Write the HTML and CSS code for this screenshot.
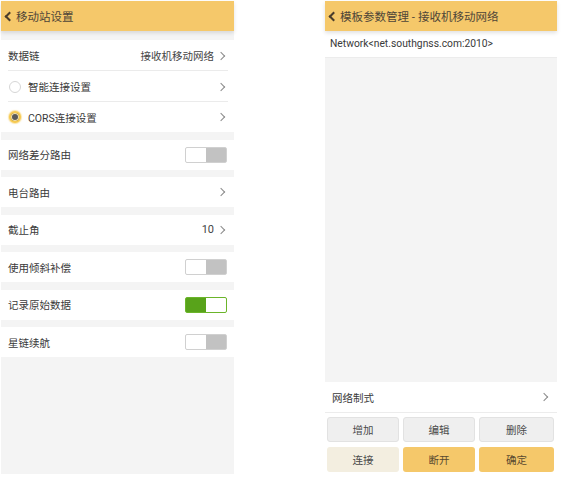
FILE: index.html
```html
<!DOCTYPE html>
<html>
<head>
<meta charset="utf-8">
<link rel="stylesheet" href="styles.css">
</head>
<body>
<div class="stage">
  <div class="phone left">
    <div class="header"><span class="back"></span><span class="title">移动站设置</span></div>
    <div class="content">
      <div class="group">
        <div class="row sep"><span class="label">数据链</span><span class="value">接收机移动网络</span><span class="chev"></span></div>
        <div class="row sep radio-row"><span class="radio"></span><span class="label">智能连接设置</span><span class="chev"></span></div>
        <div class="row radio-row"><span class="radio on"></span><span class="label">CORS连接设置</span><span class="chev"></span></div>
      </div>
      <div class="group gap"><div class="row"><span class="label">网络差分路由</span><span class="toggle"></span></div></div>
      <div class="group gap"><div class="row"><span class="label">电台路由</span><span class="chev"></span></div></div>
      <div class="group gap"><div class="row"><span class="label">截止角</span><span class="value num">10</span><span class="chev"></span></div></div>
      <div class="group gap"><div class="row"><span class="label">使用倾斜补偿</span><span class="toggle"></span></div></div>
      <div class="group gap"><div class="row"><span class="label">记录原始数据</span><span class="toggle on"></span></div></div>
      <div class="group gap"><div class="row"><span class="label">星链续航</span><span class="toggle"></span></div></div>
    </div>
  </div>
  <div class="phone right">
    <div class="header"><span class="back"></span><span class="title">模板参数管理 - 接收机移动网络</span></div>
    <div class="net-row">Network&lt;net.southgnss.com:2010&gt;</div>
    <div class="blank"></div>
    <div class="mode-row"><span class="label">网络制式</span><span class="chev"></span></div>
    <div class="buttons">
      <div class="btn grey">增加</div>
      <div class="btn grey">编辑</div>
      <div class="btn grey">删除</div>
      <div class="btn cream">连接</div>
      <div class="btn yellow">断开</div>
      <div class="btn yellow">确定</div>
    </div>
  </div>
</div>
</body>
</html>
```
FILE: styles.css
```css
html, body {
  margin: 0;
  padding: 0;
  background: #ffffff;
}
body {
  font-family: Roboto, "Noto Sans CJK SC", sans-serif;
  color: #333;
}
.stage {
  display: flex;
  align-items: flex-start;
  padding: 1px 0 0 1px;
}
.phone {
  display: flex;
  flex-direction: column;
  position: relative;
}
.left {
  width: 233px;
  height: 473px;
  background: #f4f4f4;
}
.right {
  width: 232px;
  height: 474px;
  margin-left: 91px;
  background: #ffffff;
}
.header {
  height: 30px;
  background: #f5c86a;
  display: flex;
  align-items: center;
  box-shadow: 0 2px 4px rgba(0, 0, 0, 0.12);
  z-index: 1;
  flex: none;
}
.back {
  width: 5px;
  height: 5px;
  border-left: 2px solid #4a3d2c;
  border-bottom: 2px solid #4a3d2c;
  transform: rotate(45deg);
  margin-left: 5px;
  margin-right: 3px;
  flex: none;
}
.title {
  font-size: 11.5px;
  color: #4e4538;
}
.content {
  padding-top: 9px;
}
.group {
  background: #ffffff;
}
.group.gap {
  margin-top: 7.5px;
}
.row {
  height: 30px;
  display: flex;
  align-items: center;
  padding: 0 7px 0 7px;
  position: relative;
  font-size: 10.5px;
}
.row.sep {
  height: 31px;
}
.row.sep::after {
  content: "";
  position: absolute;
  left: 7px;
  right: 6px;
  bottom: 0;
  height: 1px;
  background: #ebebeb;
}
.label {
  flex: 1;
  color: #3a3a3a;
}
.value {
  color: #444;
  margin-right: 4px;
}
.value.num {
  font-size: 11px;
}
.chev {
  width: 5px;
  height: 5px;
  border-right: 1px solid #8a8a8a;
  border-top: 1px solid #8a8a8a;
  transform: rotate(45deg);
  margin-right: 3px;
  flex: none;
}
.radio-row .label {
  margin-left: 7px;
}
.radio {
  width: 10px;
  height: 10px;
  border-radius: 50%;
  border: 1px solid #d6d6d6;
  background: #fff;
  margin-left: 1px;
  flex: none;
}
.radio.on {
  background: #5a5a5a;
  border: 2px solid #f6c94f;
  width: 8px;
  height: 8px;
  box-shadow: inset 0 0 0 1px #f8e6b0, 0 0 1px 1px rgba(246, 201, 79, 0.5);
}
.toggle {
  width: 40px;
  height: 14px;
  border: 1px solid #d0d0d0;
  border-radius: 2px;
  background: linear-gradient(to right, #ffffff 0, #ffffff 50%, #c2c2c2 50%, #c2c2c2 100%);
  flex: none;
}
.toggle.on {
  border-color: #6bb52a;
  background: linear-gradient(to right, #58a31a 0, #58a31a 50%, #ffffff 50%, #ffffff 100%);
}
.net-row {
  height: 26px;
  line-height: 26px;
  padding-left: 5px;
  font-size: 10.3px;
  color: #3a3a3a;
  background: #fff;
  border-bottom: 1px solid #ececec;
  flex: none;
}
.blank {
  flex: 1;
  background: #f4f4f4;
}
.mode-row {
  height: 30px;
  display: flex;
  align-items: center;
  padding: 0 7px 0 7px;
  font-size: 10.5px;
  background: #fff;
  border-bottom: 1px solid #ececec;
  flex: none;
}
.buttons {
  display: grid;
  grid-template-columns: 72px 72px 75px;
  grid-auto-rows: 25px;
  column-gap: 4px;
  row-gap: 5px;
  padding: 4px 3px 3px 2px;
  background: #fff;
  flex: none;
}
.btn {
  display: flex;
  align-items: center;
  justify-content: center;
  border-radius: 3px;
  font-size: 10.5px;
  color: #4a4a4a;
}
.btn.grey {
  background: #efefef;
  border: 1px solid #e2e2e2;
}
.btn.cream {
  background: #f3eee0;
}
.btn.yellow {
  background: #f5c86a;
  color: #5a4a30;
}
```
